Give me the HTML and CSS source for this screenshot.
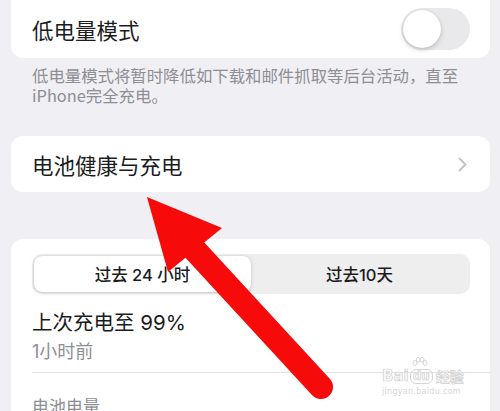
FILE: index.html
```html
<!DOCTYPE html>
<html lang="zh-CN">
<head>
    <meta charset="UTF-8">
    <meta name="viewport" content="width=device-width, initial-scale=1.0">
    <title>电池</title>
    <link rel="stylesheet" href="styles.css">
</head>
<body>
    <div class="screen">
        <div class="card card-top">
            <div class="row">
                <span class="label">低电量模式</span>
                <div class="toggle"><div class="knob"></div></div>
            </div>
        </div>
        <p class="footnote">低电量模式将暂时降低如下载和邮件抓取等后台活动，直至iPhone完全充电。</p>

        <div class="card card-link">
            <div class="row">
                <span class="label">电池健康与充电</span>
                <svg class="chevron" width="9" height="15" viewBox="0 0 9 15">
                    <path d="M1.5 1.5 L7.5 7.5 L1.5 13.5" fill="none" stroke="#c4c4c7" stroke-width="2" stroke-linecap="round" stroke-linejoin="round"/>
                </svg>
            </div>
        </div>

        <div class="card card-usage">
            <div class="segmented">
                <div class="seg active">过去 24 小时</div>
                <div class="seg">过去10天</div>
            </div>
            <div class="charge-title">上次充电至 99%</div>
            <div class="charge-sub">1小时前</div>
            <div class="divider"></div>
            <div class="section-label">电池电量</div>
        </div>

        <div class="watermark">
            <div class="wm-logo">
                <span class="wm-bai">Bai</span>
                <span class="wm-du">
                    <svg class="wm-paw" width="16" height="13" viewBox="0 0 16 13">
                        <g fill="none" stroke="#d4d4d4" stroke-width="1">
                            <ellipse cx="3" cy="6" rx="2" ry="2.5"/>
                            <ellipse cx="6.3" cy="2.8" rx="2" ry="2.4"/>
                            <ellipse cx="10" cy="2.8" rx="2" ry="2.4"/>
                            <ellipse cx="13" cy="6" rx="2" ry="2.5"/>
                        </g>
                    </svg>
                    du
                </span>
                <span class="wm-jy">经验</span>
            </div>
            <div class="wm-url">jingyan.baidu.com</div>
        </div>

        <svg class="arrow" width="500" height="411" viewBox="0 0 500 411">
            <line x1="192" y1="247" x2="321" y2="387" stroke="#f70a0a" stroke-width="24" stroke-linecap="round"/>
            <polygon points="147,197 222,228 168,272" fill="#f70a0a"/>
        </svg>
    </div>
</body>
</html>
```

FILE: styles.css
```css
*{
    margin: 0;
    padding: 0;
    box-sizing: border-box;
}
body{
    background: #f0eff4;
    font-family: "Inter", "Noto Sans CJK SC", sans-serif;
    color: #1c1c1e;
}
.screen{
    position: relative;
    width: 500px;
    height: 411px;
    overflow: hidden;
}
.card{
    background: #fff;
    margin: 0 10px 0 11px;
    border-radius: 12px;
}
.card-top{
    height: 58px;
    border-radius: 0 0 12px 12px;
}
.row{
    height: 100%;
    display: flex;
    align-items: center;
    justify-content: space-between;
    padding: 0 20px 0 21px;
}
.label{
    font-size: 21.5px;
    font-family: "Noto Sans CJK SC", sans-serif;
}
.toggle{
    width: 69px;
    height: 42px;
    border-radius: 21px;
    background: #e9e9eb;
    padding: 2px;
}
.knob{
    width: 38px;
    height: 38px;
    border-radius: 50%;
    background: #fff;
    box-shadow: 0 2px 5px rgba(0,0,0,0.18), 0 0 1px rgba(0,0,0,0.15);
}
.footnote{
    margin: 7px 30px 0 32px;
    font-size: 16.4px;
    line-height: 20px;
    color: #8e8e93;
    font-family: "Noto Sans CJK SC", sans-serif;
}
.card-link{
    margin-top: 31px;
    height: 56px;
}
.card-link .row{
    padding-right: 23px;
}
.card-usage{
    margin-top: 47px;
    padding: 15px 0 0 21px;
    height: 200px;
}
.segmented{
    display: flex;
    margin-right: 20px;
    height: 40px;
    padding: 2px;
    border-radius: 10px;
    background: #eeeeef;
}
.seg{
    flex: 1;
    display: flex;
    align-items: center;
    justify-content: center;
    font-size: 16.5px;
    font-weight: 500;
    color: #1c1c1e;
}
.seg.active{
    background: #fff;
    border-radius: 8px;
    box-shadow: 0 1px 4px rgba(0,0,0,0.14), 0 0 1px rgba(0,0,0,0.2);
}
.charge-title{
    margin-top: 16px;
    font-size: 20.5px;
    line-height: 26px;
}
.charge-sub{
    margin-top: 5px;
    font-size: 18px;
    line-height: 22px;
    color: #8e8e93;
}
.divider{
    margin-top: 9px;
    height: 1px;
    background: #e2e2e5;
}
.section-label{
    margin-top: 23px;
    font-size: 17px;
    line-height: 22px;
    color: #8e8e93;
}
.watermark{
    position: absolute;
    left: 382px;
    top: 357px;
    width: 92px;
    font-family: "DejaVu Sans", sans-serif;
}
.wm-logo{
    display: flex;
    align-items: flex-end;
    height: 27px;
}
.wm-bai, .wm-du, .wm-jy{
    font-size: 15px;
    font-weight: bold;
    line-height: 15px;
    color: #fafafa;
    -webkit-text-stroke: 0.7px #d0d0d0;
}
.wm-du{
    position: relative;
    margin-left: 1px;
    padding: 0 2px;
    border: 1px solid #d6d6d6;
    border-radius: 6px;
    font-size: 12px;
    line-height: 13px;
}
.wm-paw{
    position: absolute;
    left: 1px;
    top: -13px;
}
.wm-jy{
    margin-left: 3px;
    font-family: "Noto Sans CJK SC", sans-serif;
    font-size: 14px;
}
.wm-url{
    margin-top: 3px;
    font-size: 8px;
    line-height: 9px;
    letter-spacing: 0.3px;
    color: #d6d6d6;
}
.arrow{
    position: absolute;
    left: 0;
    top: 0;
}
```
